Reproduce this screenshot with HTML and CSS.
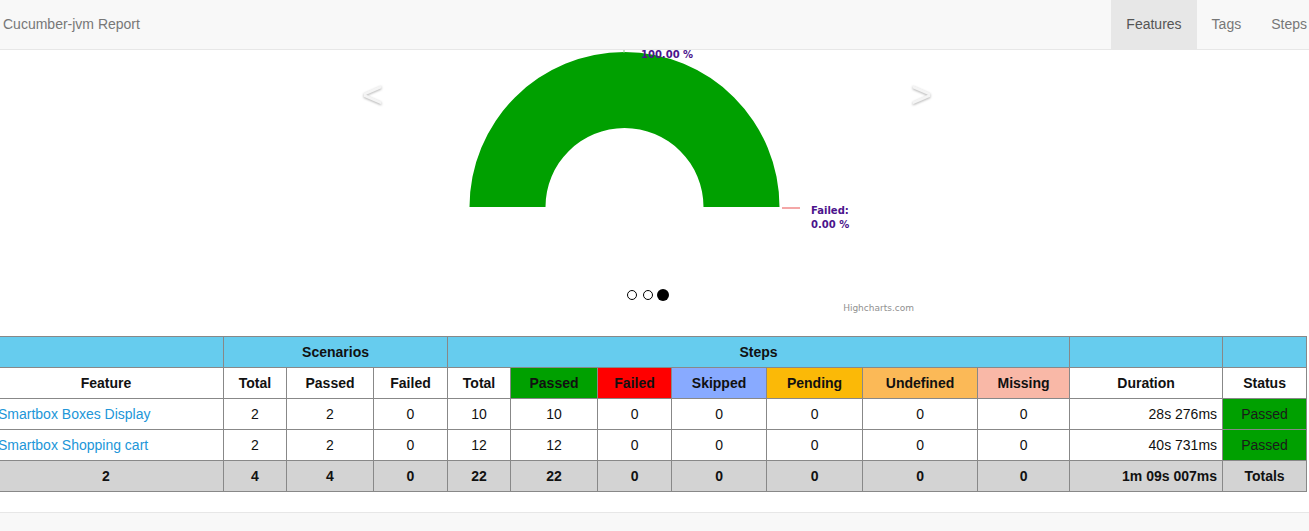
FILE: index.html
```html
<!DOCTYPE html>
<html>
<head>
<meta charset="utf-8">
<title>Cucumber-jvm Report</title>
<link rel="stylesheet" href="styles.css">
</head>
<body>
<div class="page">
  <nav class="navbar">
    <a class="brand" href="#">Cucumber-jvm Report</a>
    <ul class="nav">
      <li class="active"><a href="#">Features</a></li>
      <li><a href="#">Tags</a></li>
      <li><a href="#">Steps</a></li>
    </ul>
  </nav>

  <section class="chart-area">
    <div class="carousel">
      <svg class="chart" width="600" height="286" viewBox="0 0 600 286" xmlns="http://www.w3.org/2000/svg">
        <text class="arrow" x="12" y="57">&lt;</text>
        <text class="arrow" x="561" y="57">&gt;</text>
        <path d="M 119.5 157 A 155 155 0 0 1 429.5 157 L 353.5 157 A 79 79 0 0 0 195.5 157 Z" fill="#00a000"/>
        <line x1="274" y1="0" x2="274" y2="3" stroke="#7fcf7f" stroke-width="1"/>
        <text class="label" x="291" y="8">100.00 %</text>
        <line x1="432" y1="158" x2="450" y2="158" stroke="#f08a8a" stroke-width="1.5"/>
        <text class="label" x="461" y="164">Failed:</text>
        <text class="label" x="461" y="178">0.00 %</text>
        <circle cx="282" cy="245" r="4.5" fill="#fff" stroke="#000" stroke-width="1"/>
        <circle cx="298" cy="245" r="4.5" fill="#fff" stroke="#000" stroke-width="1"/>
        <circle cx="313" cy="245" r="6" fill="#000"/>
        <text class="credits" x="564" y="261">Highcharts.com</text>
      </svg>
    </div>
  </section>

  <table class="stats">
    <colgroup>
      <col class="c-feature"><col class="c-total"><col class="c-passed"><col class="c-failed">
      <col class="c-total"><col class="c-passed"><col class="c-failed"><col class="c-skipped">
      <col class="c-pending"><col class="c-undefined"><col class="c-missing"><col class="c-duration"><col class="c-status">
    </colgroup>
    <thead>
      <tr class="group">
        <th></th>
        <th colspan="3">Scenarios</th>
        <th colspan="7">Steps</th>
        <th></th>
        <th></th>
      </tr>
      <tr class="heads">
        <th>Feature</th>
        <th>Total</th>
        <th>Passed</th>
        <th>Failed</th>
        <th>Total</th>
        <th class="passed">Passed</th>
        <th class="failed">Failed</th>
        <th class="skipped">Skipped</th>
        <th class="pending">Pending</th>
        <th class="undefined">Undefined</th>
        <th class="missing">Missing</th>
        <th>Duration</th>
        <th>Status</th>
      </tr>
    </thead>
    <tbody>
      <tr>
        <td class="name"><a href="#">Smartbox Boxes Display</a></td>
        <td>2</td><td>2</td><td>0</td>
        <td>10</td><td>10</td><td>0</td><td>0</td><td>0</td><td>0</td><td>0</td>
        <td class="duration">28s 276ms</td>
        <td class="passed">Passed</td>
      </tr>
      <tr>
        <td class="name"><a href="#">Smartbox Shopping cart</a></td>
        <td>2</td><td>2</td><td>0</td>
        <td>12</td><td>12</td><td>0</td><td>0</td><td>0</td><td>0</td><td>0</td>
        <td class="duration">40s 731ms</td>
        <td class="passed">Passed</td>
      </tr>
    </tbody>
    <tfoot>
      <tr class="totals">
        <td>2</td>
        <td>4</td><td>4</td><td>0</td>
        <td>22</td><td>22</td><td>0</td><td>0</td><td>0</td><td>0</td><td>0</td>
        <td class="duration">1m 09s 007ms</td>
        <td>Totals</td>
      </tr>
    </tfoot>
  </table>

  <footer class="footer"></footer>
</div>
</body>
</html>
```

FILE: styles.css
```css
html, body {
  margin: 0;
  padding: 0;
  background: #fff;
  overflow: hidden;
}

body {
  font-family: "Liberation Sans", Arial, sans-serif;
  font-size: 14px;
  color: #333;
}

.page {
  margin-left: -12px;
  width: 1334px;
}

/* navbar */
.navbar {
  display: flex;
  justify-content: space-between;
  height: 49px;
  background: #f8f8f8;
  border-bottom: 1px solid #e7e7e7;
}

.brand {
  display: block;
  padding: 0 15px;
  line-height: 49px;
  font-size: 14px;
  color: #777;
  text-decoration: none;
}

.nav {
  display: flex;
  margin: 0;
  padding: 0;
  list-style: none;
}

.nav li a {
  display: block;
  padding: 0 15px;
  line-height: 49px;
  font-size: 14px;
  color: #777;
  text-decoration: none;
}

.nav li.active a {
  background: #e7e7e7;
  color: #555;
}

/* chart */
.chart-area {
  height: 286px;
}

.carousel {
  margin-left: 362px;
  width: 600px;
  height: 286px;
}

.chart {
  display: block;
  overflow: hidden;
}

.arrow {
  font-family: "Liberation Sans", Arial, sans-serif;
  font-size: 36px;
  fill: #f4f4f4;
  filter: drop-shadow(0 1px 1px rgba(0, 0, 0, 0.3));
}

.label {
  font-family: "DejaVu Sans", Verdana, sans-serif;
  font-size: 10px;
  font-weight: bold;
  fill: #4b148c;
}

.credits {
  font-family: "DejaVu Sans", Verdana, sans-serif;
  font-size: 9px;
  fill: #909090;
  text-anchor: end;
}

/* table */
.stats {
  border-collapse: collapse;
  table-layout: fixed;
  width: 1318px;
  color: #111;
}

.c-feature { width: 235px; }
.c-total { width: 63px; }
.c-passed { width: 87px; }
.c-failed { width: 74px; }
.c-skipped { width: 95px; }
.c-pending { width: 96px; }
.c-undefined { width: 115px; }
.c-missing { width: 92px; }
.c-duration { width: 153px; }
.c-status { width: 84px; }

.stats th,
.stats td {
  border: 1px solid #888;
  height: 30px;
  padding: 0 5px;
  text-align: center;
  vertical-align: middle;
  white-space: nowrap;
  overflow: hidden;
}

.stats th {
  font-weight: bold;
  background: #fff;
}

.stats .group th {
  background: #66ccee;
}

.stats .heads th.passed { background: #00a000; }
.stats .heads th.failed { background: #ff0000; }
.stats .heads th.skipped { background: #88aaff; }
.stats .heads th.pending { background: #fbb907; }
.stats .heads th.undefined { background: #fbb957; }
.stats .heads th.missing { background: #f9b8a7; }

.stats td.name {
  text-align: left;
  padding-left: 9px;
}

.stats td.name a {
  color: #2196d8;
  text-decoration: none;
}

.stats td.duration {
  text-align: right;
}

.stats td.passed {
  background: #00a000;
  color: #1a1a1a;
}

.stats .totals td {
  background: #d3d3d3;
  font-weight: bold;
}

/* footer */
.footer {
  margin-top: 20px;
  height: 40px;
  background: #f8f8f8;
  border-top: 1px solid #e7e7e7;
}
```
